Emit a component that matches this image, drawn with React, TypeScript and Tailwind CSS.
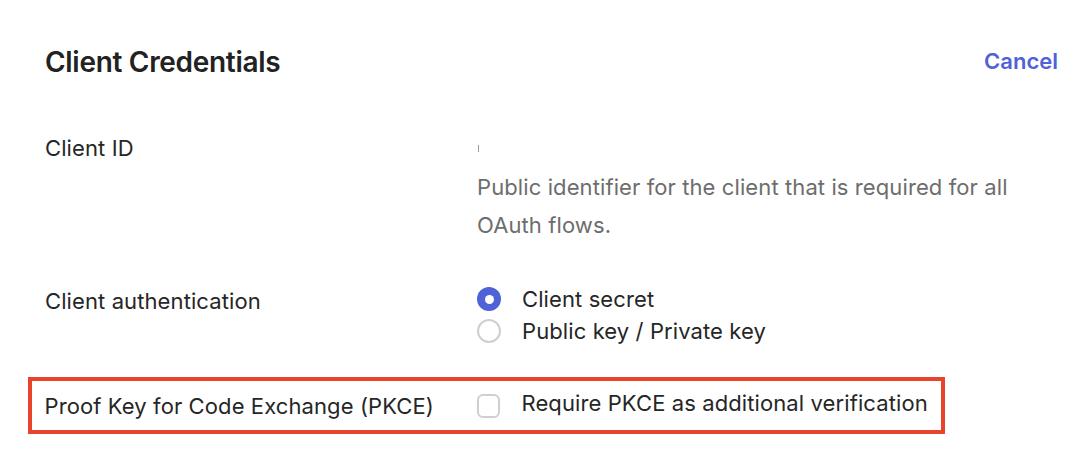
import React from "react";

const font = { fontFamily: "Inter, 'Noto Sans', sans-serif" };

function Radio({ checked }: { checked?: boolean }) {
  return checked ? (
    <span className="flex size-[24px] shrink-0 items-center justify-center rounded-full bg-[#4f62d8]">
      <span className="size-[9px] rounded-full bg-white" />
    </span>
  ) : (
    <span className="size-[24px] shrink-0 rounded-full border-[2.5px] border-[#cfcfcf] bg-white" />
  );
}

export default function App() {
  return (
    <div className="min-h-[454px] w-[1092px] bg-white pl-[45px] pr-[34px] pt-[45px] tracking-[0.1px] text-[#262626]" style={font}>
      <div className="flex h-[32px] items-center justify-between">
        <h1 className="mt-[1px] text-[28px] font-semibold tracking-[-0.3px] text-[#222]">Client Credentials</h1>
        <button type="button" className="text-[22px] font-semibold tracking-normal text-[#4f62d8]">
          Cancel
        </button>
      </div>

      <div className="mt-[57px] flex">
        <div className="w-[432px] shrink-0 text-[22px] leading-[28px]">Client ID</div>
        <div className="min-w-0">
          <div className="flex h-[28px] items-center pl-[1px]">
            <span className="h-[7px] w-px bg-[#9a9a9a]" />
          </div>
          <p className="mt-[6px] max-w-[560px] text-[22px] leading-[38px] text-[#6d6d6d]">
            Public identifier for the client that is required for all OAuth flows.
          </p>
        </div>
      </div>

      <div className="mt-[39px] flex">
        <div className="w-[432px] shrink-0 pt-[2px] text-[22px] leading-[32px]">Client authentication</div>
        <div className="flex flex-col">
          <label className="flex h-[32px] items-center gap-[21px]">
            <Radio checked />
            <span className="text-[22px]">Client secret</span>
          </label>
          <label className="flex h-[32px] items-center gap-[21px]">
            <Radio />
            <span className="text-[22px]">Public key / Private key</span>
          </label>
        </div>
      </div>

      <div className="-ml-[17px] mt-[30px] flex h-[57px] w-[917px] items-center border-[4.5px] border-[#e8432b] pl-[12.5px]">
        <div className="w-[432px] shrink-0 pt-[2px] text-[22px]">Proof Key for Code Exchange (PKCE)</div>
        <label className="flex items-center gap-[22px]">
          <span className="h-[24px] w-[23px] shrink-0 rounded-[6px] border-[2.5px] border-[#cfcfcf] bg-white" />
          <span className="-mt-[4px] text-[22px]">Require PKCE as additional verification</span>
        </label>
      </div>
    </div>
  );
}
